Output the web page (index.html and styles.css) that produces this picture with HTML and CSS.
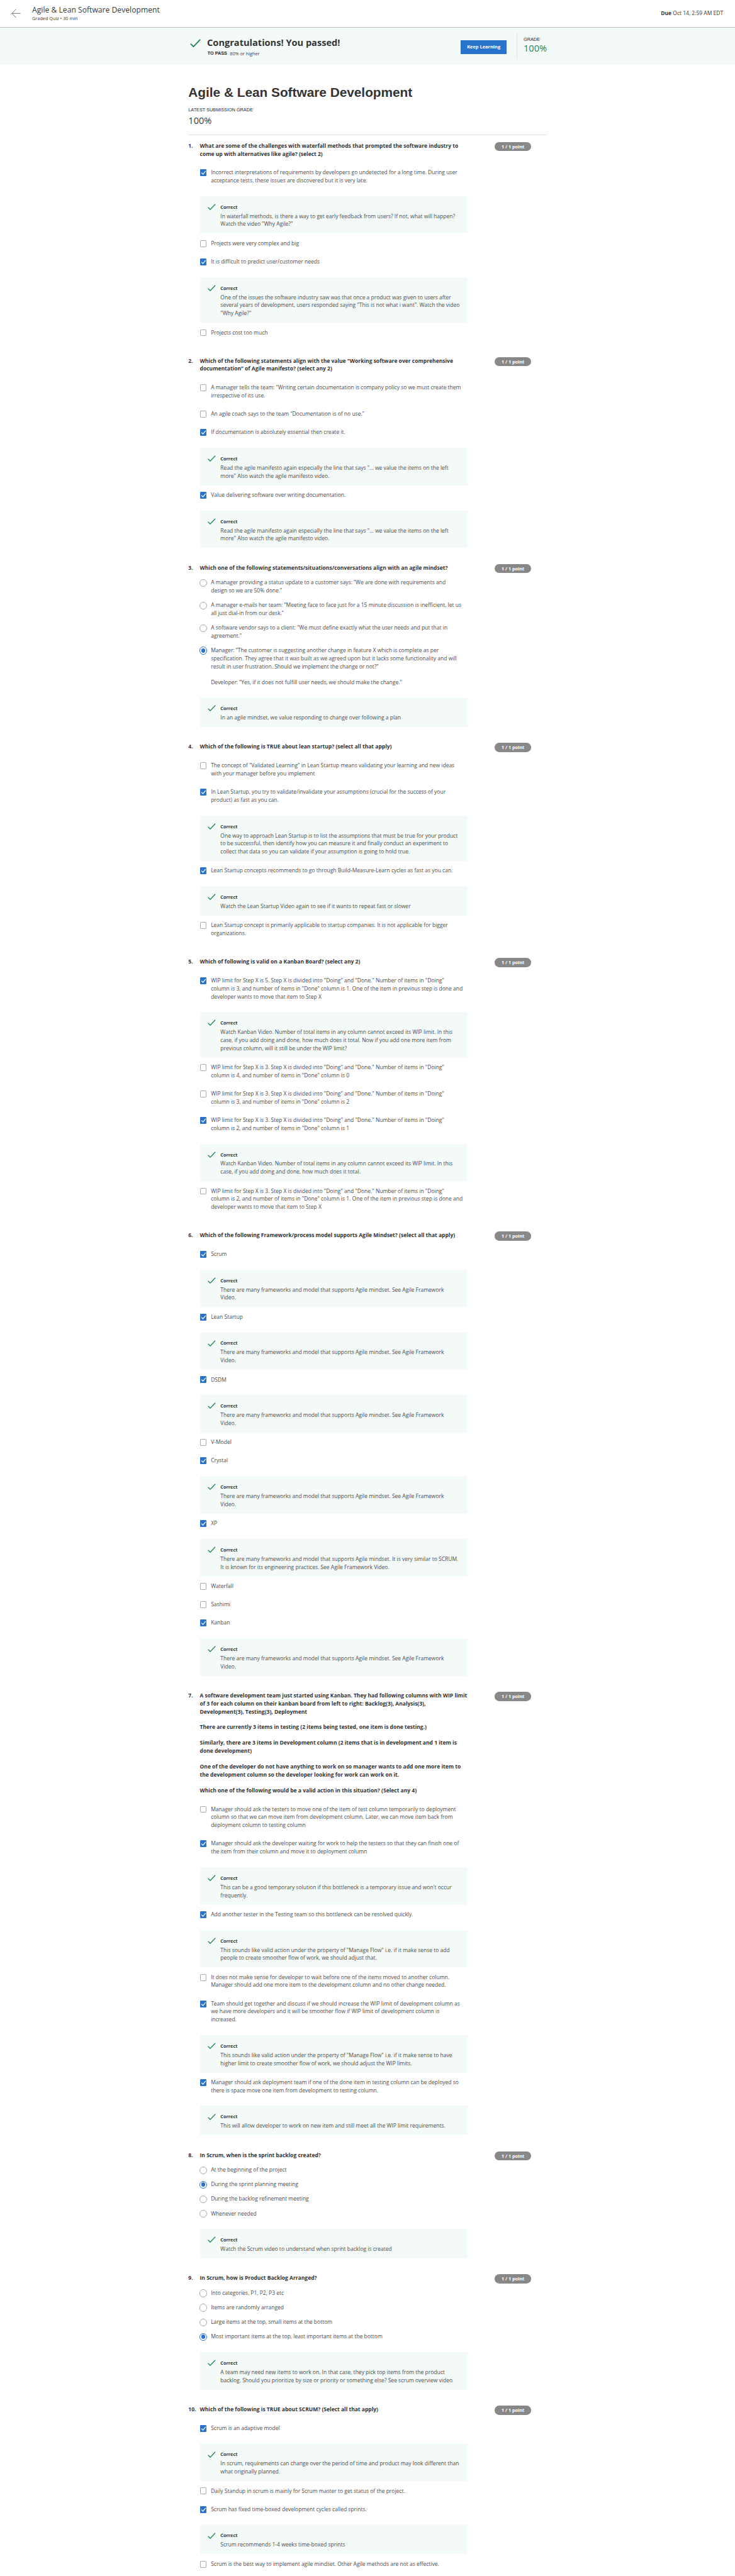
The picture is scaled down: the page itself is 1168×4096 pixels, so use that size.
FILE: index.html
```html
<!DOCTYPE html>
<html lang="en">
<head>
<meta charset="utf-8">
<title>Agile &amp; Lean Software Development</title>
<link rel="stylesheet" href="styles.css">
</head>
<body>
<svg class="sprite" aria-hidden="true">
  <symbol id="tick" viewBox="0 0 28 22"><path d="M1.5 12.5 9 20 26.5 1.5" fill="none" stroke="#1f8354" stroke-width="3"/></symbol>
  <symbol id="mark" viewBox="0 0 18 18"><path d="M3.6 9.2 7.4 13.2 14.6 4.6" fill="none" stroke="#fff" stroke-width="2"/></symbol>
</svg>

<header class="topbar">
  <svg class="back" viewBox="0 0 24 24"><path d="M12.5 1 1.5 12l11 11M1.5 12H24" fill="none" stroke="#4a4a58" stroke-width="1.3"/></svg>
  <div class="topbar-title">
    <div class="name">Agile &amp; Lean Software Development</div>
    <div class="meta">Graded Quiz • 30 min</div>
  </div>
  <div class="due"><b>Due</b> Oct 14, 2:59 AM EDT</div>
</header>

<section class="banner">
  <div class="banner-inner">
    <svg class="banner-tick"><use href="#tick"/></svg>
    <div class="banner-text">
      <div class="congrats">Congratulations! You passed!</div>
      <div class="pass"><span class="caps strong">TO PASS</span><span class="pass-value">80% or higher</span></div>
    </div>
    <button class="keep" type="button">Keep Learning</button>
    <div class="grade">
      <div class="caps">GRADE</div>
      <div class="grade-value">100%</div>
    </div>
  </div>
</section>

<main class="page">
  <h1>Agile &amp; Lean Software Development</h1>
  <div class="caps latest">LATEST SUBMISSION GRADE</div>
  <div class="score">100%</div>
  <hr>

  <section class="question">
    <div class="num">1.</div>
    <div class="main">
      <div class="prompt"><p>What are some of the challenges with waterfall methods that prompted the software industry to<br>come up with alternatives like agile? (select 2)</p></div>
      <div class="option"><i class="box on"><svg><use href="#mark"/></svg></i><p>Incorrect interpretations of requirements by developers go undetected for a long time. During user<br>acceptance tests, these issues are discovered but it is very late.</p></div>
      <div class="feedback"><svg><use href="#tick"/></svg><div><b>Correct</b><p>In waterfall methods, is there a way to get early feedback from users? If not, what will happen?<br>Watch the video "Why Agile?"</p></div></div>
      <div class="option"><i class="box"></i><p>Projects were very complex and big</p></div>
      <div class="option"><i class="box on"><svg><use href="#mark"/></svg></i><p>It is difficult to predict user/customer needs</p></div>
      <div class="feedback"><svg><use href="#tick"/></svg><div><b>Correct</b><p>One of the issues the software industry saw was that once a product was given to users after<br>several years of development, users responded saying "This is not what i want". Watch the video<br>"Why Agile?"</p></div></div>
      <div class="option"><i class="box"></i><p>Projects cost too much</p></div>
    </div>
    <div class="points">1 / 1 point</div>
  </section>

  <section class="question">
    <div class="num">2.</div>
    <div class="main">
      <div class="prompt"><p>Which of the following statements align with the value "Working software over comprehensive<br>documentation” of Agile manifesto? (select any 2)</p></div>
      <div class="option"><i class="box"></i><p>A manager tells the team: “Writing certain documentation is company policy so we must create them<br>irrespective of its use.</p></div>
      <div class="option"><i class="box"></i><p>An agile coach says to the team “Documentation is of no use.”</p></div>
      <div class="option"><i class="box on"><svg><use href="#mark"/></svg></i><p>If documentation is absolutely essential then create it.</p></div>
      <div class="feedback"><svg><use href="#tick"/></svg><div><b>Correct</b><p>Read the agile manifesto again especially the line that says "... we value the items on the left<br>more" Also watch the agile manifesto video.</p></div></div>
      <div class="option"><i class="box on"><svg><use href="#mark"/></svg></i><p>Value delivering software over writing documentation.</p></div>
      <div class="feedback"><svg><use href="#tick"/></svg><div><b>Correct</b><p>Read the agile manifesto again especially the line that says "... we value the items on the left<br>more" Also watch the agile manifesto video.</p></div></div>
    </div>
    <div class="points">1 / 1 point</div>
  </section>

  <section class="question single">
    <div class="num">3.</div>
    <div class="main">
      <div class="prompt"><p>Which one of the following statements/situations/conversations align with an agile mindset?</p></div>
      <div class="option"><i class="radio"></i><p>A manager providing a status update to a customer says: “We are done with requirements and<br>design so we are 50% done.”</p></div>
      <div class="option"><i class="radio"></i><p>A manager e-mails her team: “Meeting face to face just for a 15 minute discussion is inefficient, let us<br>all just dial-in from our desk.”</p></div>
      <div class="option"><i class="radio"></i><p>A software vendor says to a client: "We must define exactly what the user needs and put that in<br>agreement."</p></div>
      <div class="option"><i class="radio on"></i><div class="paragraphs"><p>Manager: “The customer is suggesting another change in feature X which is complete as per<br>specification. They agree that it was built as we agreed upon but it lacks some functionality and will<br>result in user frustration. Should we implement the change or not?”</p><p>Developer: “Yes, if it does not fulfill user needs, we should make the change."</p></div></div>
      <div class="feedback"><svg><use href="#tick"/></svg><div><b>Correct</b><p>In an agile mindset, we value responding to change over following a plan</p></div></div>
    </div>
    <div class="points">1 / 1 point</div>
  </section>

  <section class="question">
    <div class="num">4.</div>
    <div class="main">
      <div class="prompt"><p>Which of the following is TRUE about lean startup? (select all that apply)</p></div>
      <div class="option"><i class="box"></i><p>The concept of "Validated Learning" in Lean Startup means validating your learning and new ideas<br>with your manager before you implement</p></div>
      <div class="option"><i class="box on"><svg><use href="#mark"/></svg></i><p>In Lean Startup, you try to validate/invalidate your assumptions (crucial for the success of your<br>product) as fast as you can.</p></div>
      <div class="feedback"><svg><use href="#tick"/></svg><div><b>Correct</b><p>One way to approach Lean Startup is to list the assumptions that must be true for your product<br>to be successful, then identify how you can measure it and finally conduct an experiment to<br>collect that data so you can validate if your assumption is going to hold true.</p></div></div>
      <div class="option"><i class="box on"><svg><use href="#mark"/></svg></i><p>Lean Startup concepts recommends to go through Build-Measure-Learn cycles as fast as you can.</p></div>
      <div class="feedback"><svg><use href="#tick"/></svg><div><b>Correct</b><p>Watch the Lean Startup Video again to see if it wants to repeat fast or slower</p></div></div>
      <div class="option"><i class="box"></i><p>Lean Startup concept is primarily applicable to startup companies. It is not applicable for bigger<br>organizations.</p></div>
    </div>
    <div class="points">1 / 1 point</div>
  </section>

  <section class="question">
    <div class="num">5.</div>
    <div class="main">
      <div class="prompt"><p>Which of following is valid on a Kanban Board? (select any 2)</p></div>
      <div class="option"><i class="box on"><svg><use href="#mark"/></svg></i><p>WIP limit for Step X is 5. Step X is divided into "Doing" and "Done." Number of items in "Doing"<br>column is 3, and number of items in "Done" column is 1. One of the item in previous step is done and<br>developer wants to move that item to Step X</p></div>
      <div class="feedback"><svg><use href="#tick"/></svg><div><b>Correct</b><p>Watch Kanban Video. Number of total items in any column cannot exceed its WIP limit. In this<br>case, if you add doing and done, how much does it total. Now if you add one more item from<br>previous column, will it still be under the WIP limit?</p></div></div>
      <div class="option"><i class="box"></i><p>WIP limit for Step X is 3. Step X is divided into "Doing" and "Done." Number of items in "Doing"<br>column is 4, and number of items in "Done" column is 0</p></div>
      <div class="option"><i class="box"></i><p>WIP limit for Step X is 3. Step X is divided into "Doing" and "Done." Number of items in "Doing"<br>column is 3, and number of items in "Done" column is 2</p></div>
      <div class="option"><i class="box on"><svg><use href="#mark"/></svg></i><p>WIP limit for Step X is 3. Step X is divided into "Doing" and "Done." Number of items in "Doing"<br>column is 2, and number of items in "Done" column is 1</p></div>
      <div class="feedback"><svg><use href="#tick"/></svg><div><b>Correct</b><p>Watch Kanban Video. Number of total items in any column cannot exceed its WIP limit. In this<br>case, if you add doing and done, how much does it total.</p></div></div>
      <div class="option"><i class="box"></i><p>WIP limit for Step X is 3. Step X is divided into "Doing" and "Done." Number of items in "Doing"<br>column is 2, and number of items in "Done" column is 1. One of the item in previous step is done and<br>developer wants to move that item to Step X</p></div>
    </div>
    <div class="points">1 / 1 point</div>
  </section>

  <section class="question">
    <div class="num">6.</div>
    <div class="main">
      <div class="prompt"><p>Which of the following Framework/process model supports Agile Mindset? (select all that apply)</p></div>
      <div class="option"><i class="box on"><svg><use href="#mark"/></svg></i><p>Scrum</p></div>
      <div class="feedback"><svg><use href="#tick"/></svg><div><b>Correct</b><p>There are many frameworks and model that supports Agile mindset. See Agile Framework<br>Video.</p></div></div>
      <div class="option"><i class="box on"><svg><use href="#mark"/></svg></i><p>Lean Startup</p></div>
      <div class="feedback"><svg><use href="#tick"/></svg><div><b>Correct</b><p>There are many frameworks and model that supports Agile mindset. See Agile Framework<br>Video.</p></div></div>
      <div class="option"><i class="box on"><svg><use href="#mark"/></svg></i><p>DSDM</p></div>
      <div class="feedback"><svg><use href="#tick"/></svg><div><b>Correct</b><p>There are many frameworks and model that supports Agile mindset. See Agile Framework<br>Video.</p></div></div>
      <div class="option"><i class="box"></i><p>V-Model</p></div>
      <div class="option"><i class="box on"><svg><use href="#mark"/></svg></i><p>Crystal</p></div>
      <div class="feedback"><svg><use href="#tick"/></svg><div><b>Correct</b><p>There are many frameworks and model that supports Agile mindset. See Agile Framework<br>Video.</p></div></div>
      <div class="option"><i class="box on"><svg><use href="#mark"/></svg></i><p>XP</p></div>
      <div class="feedback"><svg><use href="#tick"/></svg><div><b>Correct</b><p>There are many frameworks and model that supports Agile mindset. It is very similar to SCRUM.<br>It is known for its engineering practices. See Agile Framework Video.</p></div></div>
      <div class="option"><i class="box"></i><p>Waterfall</p></div>
      <div class="option"><i class="box"></i><p>Sashimi</p></div>
      <div class="option"><i class="box on"><svg><use href="#mark"/></svg></i><p>Kanban</p></div>
      <div class="feedback"><svg><use href="#tick"/></svg><div><b>Correct</b><p>There are many frameworks and model that supports Agile mindset. See Agile Framework<br>Video.</p></div></div>
    </div>
    <div class="points">1 / 1 point</div>
  </section>

  <section class="question">
    <div class="num">7.</div>
    <div class="main">
      <div class="prompt paragraphs"><p>A software development team just started using Kanban. They had following columns with WIP limit<br>of 3 for each column on their kanban board from left to right: Backlog(3), Analysis(3),<br>Development(3), Testing(3), Deployment</p><p>There are currently 3 items in testing (2 items being tested, one item is done testing.)</p><p>Similarly, there are 3 items in Development column (2 items that is in development and 1 item is<br>done development)</p><p>One of the developer do not have anything to work on so manager wants to add one more item to<br>the development column so the developer looking for work can work on it.</p><p>Which one of the following would be a valid action in this situation? (Select any 4)</p></div>
      <div class="option"><i class="box"></i><p>Manager should ask the testers to move one of the item of test column temporarily to deployment<br>column so that we can move item from development column. Later, we can move item back from<br>deployment column to testing column</p></div>
      <div class="option"><i class="box on"><svg><use href="#mark"/></svg></i><p>Manager should ask the developer waiting for work to help the testers so that they can finish one of<br>the item from their column and move it to deployment column</p></div>
      <div class="feedback"><svg><use href="#tick"/></svg><div><b>Correct</b><p>This can be a good temporary solution if this bottleneck is a temporary issue and won't occur<br>frequently.</p></div></div>
      <div class="option"><i class="box on"><svg><use href="#mark"/></svg></i><p>Add another tester in the Testing team so this bottleneck can be resolved quickly.</p></div>
      <div class="feedback"><svg><use href="#tick"/></svg><div><b>Correct</b><p>This sounds like valid action under the property of "Manage Flow" i.e. if it make sense to add<br>people to create smoother flow of work, we should adjust that.</p></div></div>
      <div class="option"><i class="box"></i><p>It does not make sense for developer to wait before one of the items moved to another column.<br>Manager should add one more item to the development column and no other change needed.</p></div>
      <div class="option"><i class="box on"><svg><use href="#mark"/></svg></i><p>Team should get together and discuss if we should increase the WIP limit of development column as<br>we have more developers and it will be smoother flow if WIP limit of development column is<br>increased.</p></div>
      <div class="feedback"><svg><use href="#tick"/></svg><div><b>Correct</b><p>This sounds like valid action under the property of "Manage Flow" i.e. if it make sense to have<br>higher limit to create smoother flow of work, we should adjust the WIP limits.</p></div></div>
      <div class="option"><i class="box on"><svg><use href="#mark"/></svg></i><p>Manager should ask deployment team if one of the done item in testing column can be deployed so<br>there is space move one item from development to testing column.</p></div>
      <div class="feedback"><svg><use href="#tick"/></svg><div><b>Correct</b><p>This will allow developer to work on new item and still meet all the WIP limit requirements.</p></div></div>
    </div>
    <div class="points">1 / 1 point</div>
  </section>

  <section class="question single">
    <div class="num">8.</div>
    <div class="main">
      <div class="prompt"><p>In Scrum, when is the sprint backlog created?</p></div>
      <div class="option"><i class="radio"></i><p>At the beginning of the project</p></div>
      <div class="option"><i class="radio on"></i><p>During the sprint planning meeting</p></div>
      <div class="option"><i class="radio"></i><p>During the backlog refinement meeting</p></div>
      <div class="option"><i class="radio"></i><p>Whenever needed</p></div>
      <div class="feedback"><svg><use href="#tick"/></svg><div><b>Correct</b><p>Watch the Scrum video to understand when sprint backlog is created</p></div></div>
    </div>
    <div class="points">1 / 1 point</div>
  </section>

  <section class="question single">
    <div class="num">9.</div>
    <div class="main">
      <div class="prompt"><p>In Scrum, how is Product Backlog Arranged?</p></div>
      <div class="option"><i class="radio"></i><p>Into categories, P1, P2, P3 etc</p></div>
      <div class="option"><i class="radio"></i><p>Items are randomly arranged</p></div>
      <div class="option"><i class="radio"></i><p>Large items at the top, small items at the bottom</p></div>
      <div class="option"><i class="radio on"></i><p>Most important items at the top, least important items at the bottom</p></div>
      <div class="feedback"><svg><use href="#tick"/></svg><div><b>Correct</b><p>A team may need new items to work on. In that case, they pick top items from the product<br>backlog. Should you prioritize by size or priority or something else? See scrum overview video</p></div></div>
    </div>
    <div class="points">1 / 1 point</div>
  </section>

  <section class="question">
    <div class="num">10.</div>
    <div class="main">
      <div class="prompt"><p>Which of the following is TRUE about SCRUM? (Select all that apply)</p></div>
      <div class="option"><i class="box on"><svg><use href="#mark"/></svg></i><p>Scrum is an adaptive model</p></div>
      <div class="feedback"><svg><use href="#tick"/></svg><div><b>Correct</b><p>In scrum, requirements can change over the period of time and product may look different than<br>what originally planned.</p></div></div>
      <div class="option"><i class="box"></i><p>Daily Standup in scrum is mainly for Scrum master to get status of the project.</p></div>
      <div class="option"><i class="box on"><svg><use href="#mark"/></svg></i><p>Scrum has fixed time-boxed development cycles called sprints.</p></div>
      <div class="feedback"><svg><use href="#tick"/></svg><div><b>Correct</b><p>Scrum recommends 1-4 weeks time-boxed sprints</p></div></div>
      <div class="option"><i class="box"></i><p>Scrum is the best way to implement agile mindset. Other Agile methods are not as effective.</p></div>
    </div>
    <div class="points">1 / 1 point</div>
  </section>
</main>
</body>
</html>
```
FILE: styles.css
```css
/* 1rem is ten layout units */
html {
  font-size: 6.08333px;
}

* {
  box-sizing: border-box;
}

body {
  margin: 0;
  background: #fff;
  color: #373a3c;
  font-family: "Open Sans", "Noto Sans", sans-serif;
  font-size: 1.4rem;
  line-height: 2.1rem;
  white-space: nowrap;
  height: 4096px;
  overflow: hidden;
}

p,
h1 {
  margin: 0;
}

.sprite {
  position: absolute;
  width: 0;
  height: 0;
}

.caps {
  font-family: "Liberation Sans", Arial, sans-serif;
  font-size: 1.2rem;
  line-height: 1.8rem;
  color: #1f1f1f;
}

.strong {
  font-weight: 700;
}

/* Top bar */
.topbar {
  display: flex;
  align-items: center;
  height: 7.3rem;
  padding: 0 3.1rem 0 3rem;
  border-bottom: 1px solid #b8bfbd;
}

.back {
  width: 2.4rem;
  height: 2.4rem;
  margin-right: 3rem;
}

.name {
  font-size: 2rem;
  line-height: 2.6rem;
}

.meta {
  font-size: 1.2rem;
  line-height: 1.8rem;
}

.due {
  margin-left: auto;
}

/* Result banner */
.banner {
  height: 9.6rem;
  background: #f4faf8;
}

.banner-inner {
  display: flex;
  width: 93.6rem;
  margin: 0 auto;
  padding-top: 1.4rem;
}

.banner-tick {
  width: 2.8rem;
  height: 2.2rem;
  margin: 1.5rem 1.7rem 0 0.4rem;
}

.banner-text {
  flex: 1;
  padding-top: 0.9rem;
}

.congrats {
  font-size: 2.4rem;
  line-height: 3rem;
  font-weight: 700;
  color: #333;
}

.pass {
  display: flex;
  gap: 0.7rem;
  padding: 0.5rem 0 0 0.1rem;
  font-size: 1.2rem;
  line-height: 1.8rem;
}

.keep {
  width: 12.1rem;
  height: 3.6rem;
  margin: 1.8rem 2.5rem 0 0;
  padding: 0;
  border: 0;
  background: #2a73cc;
  color: #fff;
  font: 700 1.22rem/3.6rem "Open Sans", sans-serif;
}

.grade {
  width: 7.9rem;
  height: 6.8rem;
  padding: 0.9rem 0 0 1.7rem;
  border-left: 1px solid #dde3e1;
}

.grade-value {
  font-size: 2.4rem;
  line-height: 2.6rem;
  color: #1f8354;
}

/* Quiz heading */
.page {
  width: 93.6rem;
  margin: 0 auto;
}

h1 {
  padding-top: 5.1rem;
  font: 700 3.42rem/4.4rem "Liberation Sans", Arial, sans-serif;
  color: #333;
}

.latest {
  padding-top: 1.5rem;
}

.score {
  height: 5.5rem;
  padding-top: 0.3rem;
  font-size: 2.4rem;
  line-height: 3rem;
}

hr {
  height: 1px;
  margin: 0 0 1.75rem;
  border: 0;
  background: #ddd;
}

/* Questions */
.question {
  display: grid;
  grid-template-columns: 3rem 77rem 9.6rem;
  margin-bottom: 2.6rem;
}

.num,
.prompt {
  font-weight: 700;
  color: #333;
}

.main {
  display: flex;
  flex-direction: column;
  width: 70rem;
}

.prompt {
  margin-bottom: 2.8rem;
}

.single .prompt {
  margin-bottom: 1.8rem;
}

.paragraphs {
  display: flex;
  flex-direction: column;
  gap: 2rem;
}

.points {
  height: 2.4rem;
  border-radius: 1.2rem;
  background: #888;
  color: #fff;
  font-weight: 700;
  font-size: 1.2rem;
  line-height: 2.4rem;
  text-align: center;
}

.option {
  display: flex;
  gap: 1.1rem;
  margin-bottom: 2.7rem;
  color: #4c4c4c;
}

.single .option {
  margin-bottom: 1.7rem;
}

.box {
  flex: none;
  width: 1.8rem;
  height: 1.8rem;
  margin-top: 0.15rem;
  border: 1px solid #aaa;
  border-radius: 0.2rem;
}

.box.on {
  border: 0;
  background: #2a73cc;
}

.box svg {
  display: block;
  width: 1.8rem;
  height: 1.8rem;
}

.radio {
  flex: none;
  display: grid;
  place-items: center;
  width: 2rem;
  height: 2rem;
  margin: 0.05rem -0.1rem 0 -0.1rem;
  border: 1px solid #aaa;
  border-radius: 50%;
}

.radio.on {
  border-color: #2a73cc;
}

.radio.on::after {
  content: "";
  width: 1.1rem;
  height: 1.1rem;
  border-radius: 50%;
  background: #2a73cc;
}

.feedback {
  display: flex;
  margin: 0.25rem 0 1.55rem;
  padding: 1.8rem 0 1.35rem 2.1rem;
  background: #f4faf8;
  color: #4c4c4c;
}

.single .feedback {
  margin-top: 1.25rem;
}

.feedback svg {
  flex: none;
  width: 2.1rem;
  height: 1.65rem;
  margin: 0.2rem 1.2rem 0 0;
}

.feedback b {
  display: block;
  margin-bottom: 0.45rem;
  font-size: 1.2rem;
  line-height: 2rem;
  color: #333;
}
```
